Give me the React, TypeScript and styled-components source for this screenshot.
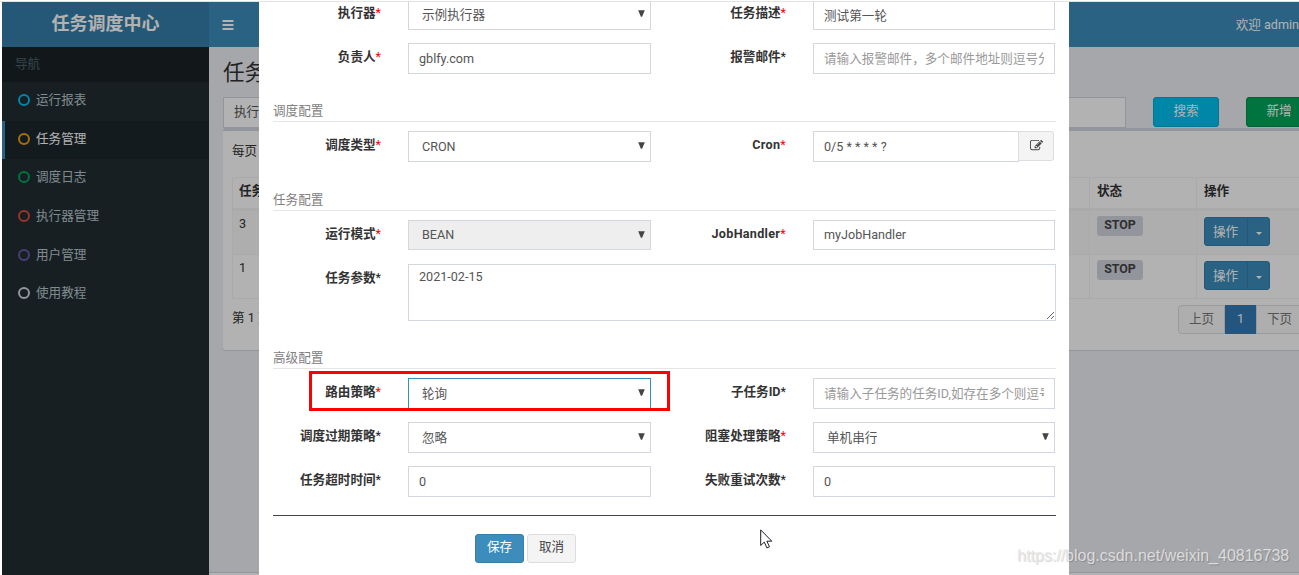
import React from "react";
import styled, { createGlobalStyle, css } from "styled-components";

const Global = createGlobalStyle`
  * { box-sizing: border-box; }
  html, body { margin: 0; overflow: hidden; background: #fff; }
  body {
    font: 12.6px/18px Roboto, "Noto Sans CJK SC", sans-serif;
    color: #333;
  }
  input, textarea, button { font: inherit; }
`;

const Screen = styled.div`
  position: relative;
  width: 1299px;
  height: 575px;
  overflow: hidden;
  padding: 2px 0 0 2px;
  background: linear-gradient(#fff 1px, #e2e3e5 1px, #e2e3e5 2px, #fff 2px);
`;
const Shell = styled.div`
  display: grid;
  grid-template-columns: 207px 1fr;
  height: 573px;
  overflow: hidden;
`;
const Sidebar = styled.aside`
  background: #222d32;
`;
const Brand = styled.div`
  height: 45px;
  background: #367fa9;
  color: #fff;
  font-size: 18px;
  font-weight: 700;
  line-height: 44px;
  text-align: center;
`;
const NavHeading = styled.div`
  height: 35px;
  padding-left: 13px;
  background: #1a2226;
  color: #4b646f;
  font-size: 12.6px;
  line-height: 33px;
`;
const NavItem = styled.a<{ $active?: boolean }>`
  display: flex;
  align-items: center;
  gap: 6px;
  height: 38.6px;
  padding: 0 0 2px 13px;
  border-left: 3px solid ${(p) => (p.$active ? "#3c8dbc" : "transparent")};
  background: ${(p) => (p.$active ? "#1e282c" : "transparent")};
  color: ${(p) => (p.$active ? "#fff" : "#b8c7ce")};
`;
const Ring = styled.i<{ $color: string }>`
  width: 12px;
  height: 12px;
  border: 2px solid ${(p) => p.$color};
  border-radius: 50%;
`;
const Main = styled.main`
  display: flex;
  flex-direction: column;
  min-width: 0;
  background: #ecf0f5;
`;
const TopBar = styled.header`
  display: flex;
  flex: none;
  align-items: center;
  justify-content: space-between;
  width: 1090px;
  height: 45px;
  padding: 0 0 0 13px;
  background: #3c8dbc;
  color: #fff;
  white-space: nowrap;
`;
const PageTitle = styled.h1`
  margin: 13px 14px 0;
  height: 37px;
  font-size: 21.6px;
  font-weight: 400;
  line-height: 26px;
`;
const Filters = styled.div`
  display: flex;
  flex: none;
  height: 31px;
  padding-left: 14px;
`;
const FilterLabel = styled.span`
  flex: none;
  width: 59px;
  height: 31px;
  padding-left: 10px;
  border: 1px solid #d2d6de;
  background: #fff;
  color: #555;
  line-height: 27px;
`;
const FilterInput = styled.input`
  flex: none;
  width: 844px;
  height: 31px;
  border: 1px solid #d2d6de;
  background: #fff;
`;
const FilterButton = styled.button<{ $bg: string; $edge: string }>`
  width: 66px;
  height: 30px;
  margin-left: 27px;
  padding: 0 0 3px;
  flex: none;
  border: 1px solid ${(p) => p.$edge};
  border-radius: 3px;
  background: ${(p) => p.$bg};
  color: #fff;
`;
const Box = styled.section`
  flex: none;
  width: 1100px;
  height: 222px;
  margin: 0 0 0 14px;
  padding: 11px 0 0 9px;
  border-top: 3px solid #d2d6de;
  border-radius: 3px;
  background: #fff;
  box-shadow: 0 1px 1px rgba(0, 0, 0, 0.1);
`;
const PageSize = styled.div`
  height: 35px;
`;
const Table = styled.div`
  width: 1080px;
  border: 1px solid #f4f4f4;
`;
const TableRow = styled.div<{ $head?: boolean; $striped?: boolean }>`
  display: grid;
  grid-template-columns: 857px 107px 1fr;
  height: ${(p) => (p.$head ? "33px" : "44px")};
  border-bottom: ${(p) => (p.$head ? "3px" : "1px")} solid #f4f4f4;
  background: ${(p) => (p.$striped ? "#f9f9f9" : "#fff")};
  font-weight: ${(p) => (p.$head ? 700 : 400)};
  &:last-child { border-bottom: 0; height: 43px; }
`;
const Cell = styled.div`
  display: flex;
  align-items: flex-start;
  padding: 4px 7px 0 7px;
  border-right: 1px solid #f4f4f4;
  &:first-child { padding-left: 6px; }
`;
const StatusTag = styled.span`
  width: 46px;
  height: 20px;
  margin-top: 1px;
  border-radius: 3px;
  background: #d2d6de;
  color: #444;
  font-weight: 700;
  font-size: 12.4px;
  line-height: 18px;
  text-align: center;
`;
const SplitButton = styled.div`
  display: flex;
  width: 66px;
  height: 29px;
  margin-top: 2px;
  border: 1px solid #367fa9;
  border-radius: 3px;
  background: #3c8dbc;
  color: #fff;
  line-height: 27px;
`;
const SplitMain = styled.span`
  width: 43px;
  padding-left: 8px;
  border-right: 1px solid #367fa9;
`;
const SplitCaret = styled.span`
  flex: 1;
  display: grid;
  place-items: center;
  &::after {
    content: "";
    margin-top: 3px;
    border: 3.5px solid transparent;
    border-top-color: #fff;
    border-bottom: 0;
  }
`;
const TableFooter = styled.div`
  display: flex;
  padding-top: 6px;
  line-height: 25px;
`;
const PageInfo = styled.span`
  width: 946px;
`;
const Pager = styled.div`
  display: flex;
  height: 29px;
`;
const PageLink = styled.span<{ $current?: boolean; $w: number }>`
  width: ${(p) => p.$w}px;
  height: 29px;
  flex: none;
  border: 1px solid ${(p) => (p.$current ? "#337ab7" : "#ddd")};
  background: ${(p) => (p.$current ? "#337ab7" : "#fafafa")};
  color: ${(p) => (p.$current ? "#fff" : "#777")};
  line-height: 25px;
  text-align: center;
  &:first-child { border-radius: 4px 0 0 4px; }
`;
const PageFooter = styled.footer`
  flex: none;
  height: 3px;
  margin-top: auto;
  border-top: 1px solid #d2d6de;
  background: #fff;
`;

const Backdrop = styled.div`
  position: absolute;
  inset: 2px 0 0 2px;
  overflow: hidden;
  background: rgba(0, 0, 0, 0.3);
`;
const Modal = styled.div`
  width: 810px;
  height: 573px;
  margin-left: 257px;
  padding: 0 13px 0 14px;
  overflow: hidden;
  background: #fff;
`;
const Form = styled.form`
  margin-top: -3px;
`;
const FormRow = styled.div`
  display: grid;
  grid-template-columns: 108px 243px 108px 242px;
  column-gap: 27px;
  height: 31px;
  & + & { margin-top: 13px; }
`;
const WideRow = styled(FormRow)`
  grid-template-columns: 108px 648px;
  height: 57px;
`;
const LabelText = styled.label<{ $latin?: boolean }>`
  padding-top: 5px;
  color: #333;
  font-weight: 700;
  letter-spacing: ${(p) => (p.$latin ? "0.3px" : "normal")};
  text-align: right;
  white-space: nowrap;
`;
const Star = styled.span<{ $red?: boolean }>`
  color: ${(p) => (p.$red ? "#f00" : "#222")};
  font-weight: 400;
`;
const fieldStyle = css`
  border: 1px solid #d2d6de;
  background: #fff;
  color: #555;
`;
const Input = styled.input<{ $short?: boolean }>`
  ${fieldStyle}
  width: 100%;
  min-width: 0;
  height: ${(p) => (p.$short ? 30 : 31)}px;
  padding: 0 10px 1px;
  border-radius: 0;
  outline: 0;
  &::placeholder { color: #999; opacity: 1; }
`;
const SelectBox = styled.div<{ $disabled?: boolean; $focused?: boolean }>`
  ${fieldStyle}
  display: flex;
  align-items: center;
  justify-content: space-between;
  height: ${(p) => (p.$disabled ? 30 : 31)}px;
  padding: 0 5px 0 13px;
  ${(p) => p.$disabled && "background: #eee;"}
  ${(p) => p.$focused && "border-color: #3c8dbc;"}
`;
const Arrow = styled.svg`
  width: 7px;
  height: 7px;
  margin-bottom: 2px;
  fill: #444;
`;
const TextArea = styled.textarea`
  ${fieldStyle}
  width: 100%;
  height: 57px;
  padding: 3px 10px;
  outline: 0;
`;
const InputGroup = styled.div`
  display: flex;
  width: 241px;
`;
const EditButton = styled.button`
  display: grid;
  place-items: center;
  flex: none;
  width: 36px;
  height: 30px;
  margin-left: -1px;
  padding: 0 0 2px;
  border: 1px solid #ddd;
  border-radius: 0 3px 3px 0;
  background: #f4f4f4;
  color: #444;
`;
const SectionTitle = styled.h4`
  height: 21px;
  margin: 27px 0 9px;
  border-bottom: 1px solid #e5e5e5;
  color: #808080;
  font-size: 12.6px;
  font-weight: 400;
  line-height: 19px;
`;
const TaskTitle = styled(SectionTitle)`
  margin-top: 28px;
`;
const Divider = styled.hr`
  height: 1px;
  margin: 18px 0;
  border: 0;
  background: #444;
`;
const Actions = styled.div`
  display: flex;
  gap: 3px;
  padding-left: 202px;
`;
const ActionButton = styled.button<{ $primary?: boolean }>`
  width: 49px;
  height: 29px;
  padding: 0 0 3px;
  border: 1px solid ${(p) => (p.$primary ? "#367fa9" : "#ddd")};
  border-radius: 3px;
  background: ${(p) => (p.$primary ? "#3c8dbc" : "#f4f4f4")};
  color: ${(p) => (p.$primary ? "#fff" : "#444")};
`;
const Highlight = styled.div`
  position: absolute;
  left: 309px;
  top: 371px;
  width: 361px;
  height: 40px;
  border: 3px solid #f00;
`;
const Pointer = styled.svg`
  position: absolute;
  left: 760px;
  top: 529px;
`;
const Watermark = styled.div`
  position: absolute;
  left: 1017px;
  top: 546px;
  color: rgba(232, 232, 232, 0.85);
  font: 16px/20px "Liberation Sans", Arial, sans-serif;
  text-shadow: 1px 1px 1px rgba(0, 0, 0, 0.18);
  white-space: nowrap;
`;

function Label({ text, red }: { text: string; red?: boolean }) {
  return <LabelText $latin={/^[A-Za-z]+$/.test(text)}>{text}<Star $red={red}>*</Star></LabelText>;
}
function Select({ value, disabled, focused }: { value: string; disabled?: boolean; focused?: boolean }) {
  return (
    <SelectBox $disabled={disabled} $focused={focused}>
      {value}
      <Arrow viewBox="0 0 7 7"><path d="M.2.3h6.6L4.1 6.8H2.9z" /></Arrow>
    </SelectBox>
  );
}
function MenuIcon() {
  return (
    <svg width="12" height="12" viewBox="0 0 12 12" fill="#fff">
      <path d="M.5 1h11v2H.5zM.5 5h11v2H.5zM.5 9h11v2H.5z" />
    </svg>
  );
}
function EditIcon() {
  return (
    <svg width="13" height="13" viewBox="0 0 1792 1792" fill="currentColor">
      <path d="M888 1184l116-116-152-152-116 116v56h96v96h56zm440-720q-16-16-33 1l-350 350q-17 17-1 33t33-1l350-350q17-17 1-33zm80 594v190q0 119-84.5 203.5t-203.5 84.5h-832q-119 0-203.5-84.5t-84.5-203.5v-832q0-119 84.5-203.5t203.5-84.5h832q63 0 117 25 15 7 18 23 3 17-9 29l-49 49q-14 14-32 8-23-6-45-6h-832q-66 0-113 47t-47 113v832q0 66 47 113t113 47h832q66 0 113-47t47-113v-126q0-13 9-22l64-64q15-15 35-7t20 29zm-96-738l288 288-672 672h-288v-288zm444 132l-92 92-288-288 92-92q28-28 68-28t68 28l152 152q28 28 28 68t-28 68z" />
    </svg>
  );
}

const navItems = [
  ["运行报表", "#00c0ef"],
  ["任务管理", "#f39c12"],
  ["调度日志", "#00a65a"],
  ["执行器管理", "#dd4b39"],
  ["用户管理", "#605ca8"],
  ["使用教程", "#d2d6de"],
];

export default function App() {
  return (
    <Screen>
      <Global />
      <Shell>
        <Sidebar>
          <Brand>任务调度中心</Brand>
          <NavHeading>导航</NavHeading>
          {navItems.map(([name, color], i) => (
            <NavItem key={name} $active={i === 1}><Ring $color={color} />{name}</NavItem>
          ))}
        </Sidebar>
        <Main>
          <TopBar><MenuIcon /><span>欢迎 admin</span></TopBar>
          <PageTitle>任务管理</PageTitle>
          <Filters>
            <FilterLabel>执行器</FilterLabel>
            <FilterInput readOnly />
            <FilterButton $bg="#00c0ef" $edge="#00acd6">搜索</FilterButton>
            <FilterButton $bg="#00a65a" $edge="#008d4c">新增</FilterButton>
          </Filters>
          <Box>
            <PageSize>每页</PageSize>
            <Table>
              <TableRow $head><Cell>任务ID</Cell><Cell>状态</Cell><Cell>操作</Cell></TableRow>
              {["3", "1"].map((id) => (
                <TableRow key={id} $striped={id === "3"}>
                  <Cell>{id}</Cell>
                  <Cell><StatusTag>STOP</StatusTag></Cell>
                  <Cell><SplitButton><SplitMain>操作</SplitMain><SplitCaret /></SplitButton></Cell>
                </TableRow>
              ))}
            </Table>
            <TableFooter>
              <PageInfo>第 1 页</PageInfo>
              <Pager>
                <PageLink $w={47}>上页</PageLink>
                <PageLink $w={31} $current>1</PageLink>
                <PageLink $w={47}>下页</PageLink>
              </Pager>
            </TableFooter>
          </Box>
          <PageFooter />
        </Main>
      </Shell>

      <Backdrop>
        <Modal>
          <Form>
            <FormRow>
              <Label text="执行器" red /><Select value="示例执行器" />
              <Label text="任务描述" red /><Input defaultValue="测试第一轮" />
            </FormRow>
            <FormRow>
              <Label text="负责人" red /><Input defaultValue="gblfy.com" />
              <Label text="报警邮件" /><Input placeholder="请输入报警邮件，多个邮件地址则逗号分隔" />
            </FormRow>
            <SectionTitle>调度配置</SectionTitle>
            <FormRow>
              <Label text="调度类型" red /><Select value="CRON" />
              <Label text="Cron" red />
              <InputGroup>
                <Input defaultValue="0/5 * * * * ?" />
                <EditButton type="button"><EditIcon /></EditButton>
              </InputGroup>
            </FormRow>
            <TaskTitle>任务配置</TaskTitle>
            <FormRow>
              <Label text="运行模式" red /><Select value="BEAN" disabled />
              <Label text="JobHandler" red /><Input $short defaultValue="myJobHandler" />
            </FormRow>
            <WideRow>
              <Label text="任务参数" /><TextArea defaultValue="2021-02-15" />
            </WideRow>
            <SectionTitle>高级配置</SectionTitle>
            <FormRow>
              <Label text="路由策略" red /><Select value="轮询" focused />
              <Label text="子任务ID" /><Input placeholder="请输入子任务的任务ID,如存在多个则逗号分隔" />
            </FormRow>
            <FormRow>
              <Label text="调度过期策略" /><Select value="忽略" />
              <Label text="阻塞处理策略" red /><Select value="单机串行" />
            </FormRow>
            <FormRow>
              <Label text="任务超时时间" /><Input defaultValue="0" />
              <Label text="失败重试次数" /><Input defaultValue="0" />
            </FormRow>
            <Divider />
            <Actions>
              <ActionButton type="button" $primary>保存</ActionButton>
              <ActionButton type="button">取消</ActionButton>
            </Actions>
          </Form>
        </Modal>
      </Backdrop>
      <Highlight />
      <Pointer width="13" height="20" viewBox="0 0 13 20">
        <path d="M.7.9v15.6l3.6-3.4 2.6 5.8 2.6-1.1-2.6-5.6h4.9z" fill="#fff" stroke="#1c1c28" />
      </Pointer>
      <Watermark>https://blog.csdn.net/weixin_40816738</Watermark>
    </Screen>
  );
}
